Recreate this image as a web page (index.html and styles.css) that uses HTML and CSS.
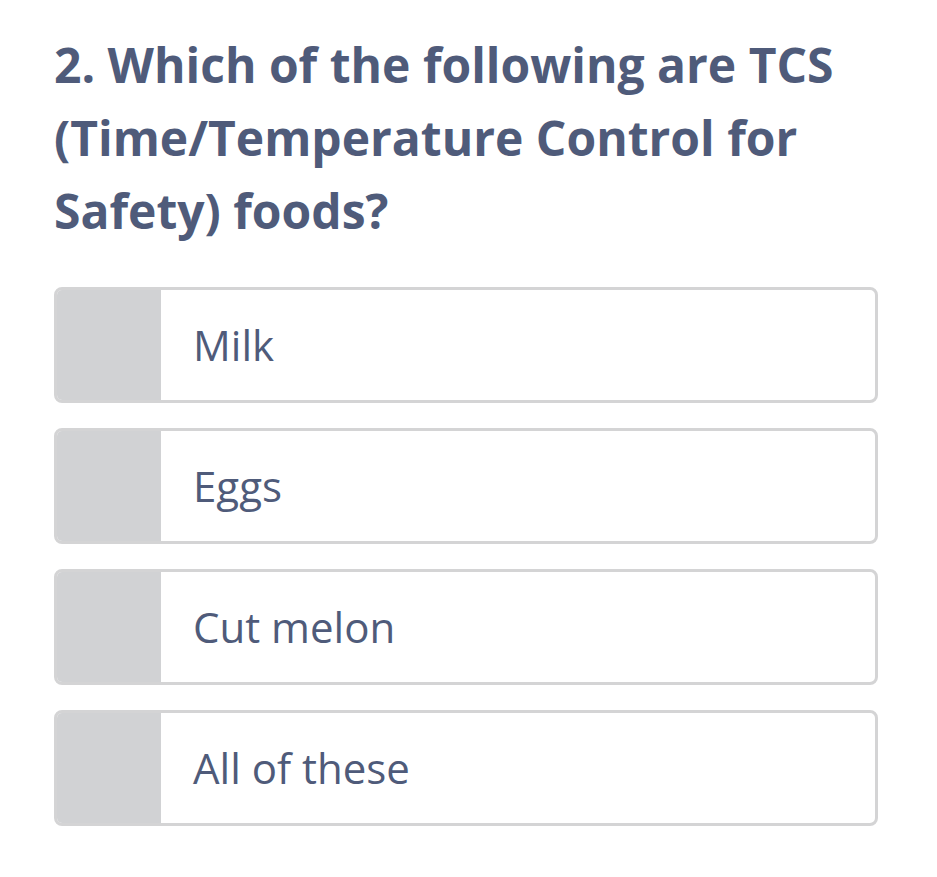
FILE: index.html
```html
<!DOCTYPE html>
<html lang="en">
<head>
	<meta charset="UTF-8">
	<title>Quiz</title>
	<link rel="stylesheet" href="styles.css">
</head>
<body>

<div class="quiz">
	<h2 class="question">2. Which of the following are TCS (Time/Temperature Control for Safety) foods?</h2>

	<div class="answers">
		<div class="answer"><span class="mark"></span><span class="label">Milk</span></div>
		<div class="answer"><span class="mark"></span><span class="label">Eggs</span></div>
		<div class="answer"><span class="mark"></span><span class="label">Cut melon</span></div>
		<div class="answer"><span class="mark"></span><span class="label">All of these</span></div>
	</div>
</div>

</body>
</html>
```

FILE: styles.css
```css
body{
	margin: 0;
	background: #fff;
	font-family: "Open Sans", "Liberation Sans", sans-serif;
	color: #4f5b7a;
}
.quiz{
	padding: 28px 59px 0 54px;
}
.question{
	margin: 0 0 40px 0;
	font-size: 48px;
	font-weight: 700;
	line-height: 73px;
}
.answers{
	display: flex;
	flex-direction: column;
	gap: 25px;
}
.answer{
	display: flex;
	align-items: center;
	height: 116px;
	box-sizing: border-box;
	border: 3px solid #d4d4d5;
	border-radius: 8px;
	overflow: hidden;
}
.mark{
	width: 104px;
	align-self: stretch;
	background-color: #d1d2d4;
}
.label{
	padding-left: 32px;
	font-size: 42px;
	line-height: 1;
}
```
